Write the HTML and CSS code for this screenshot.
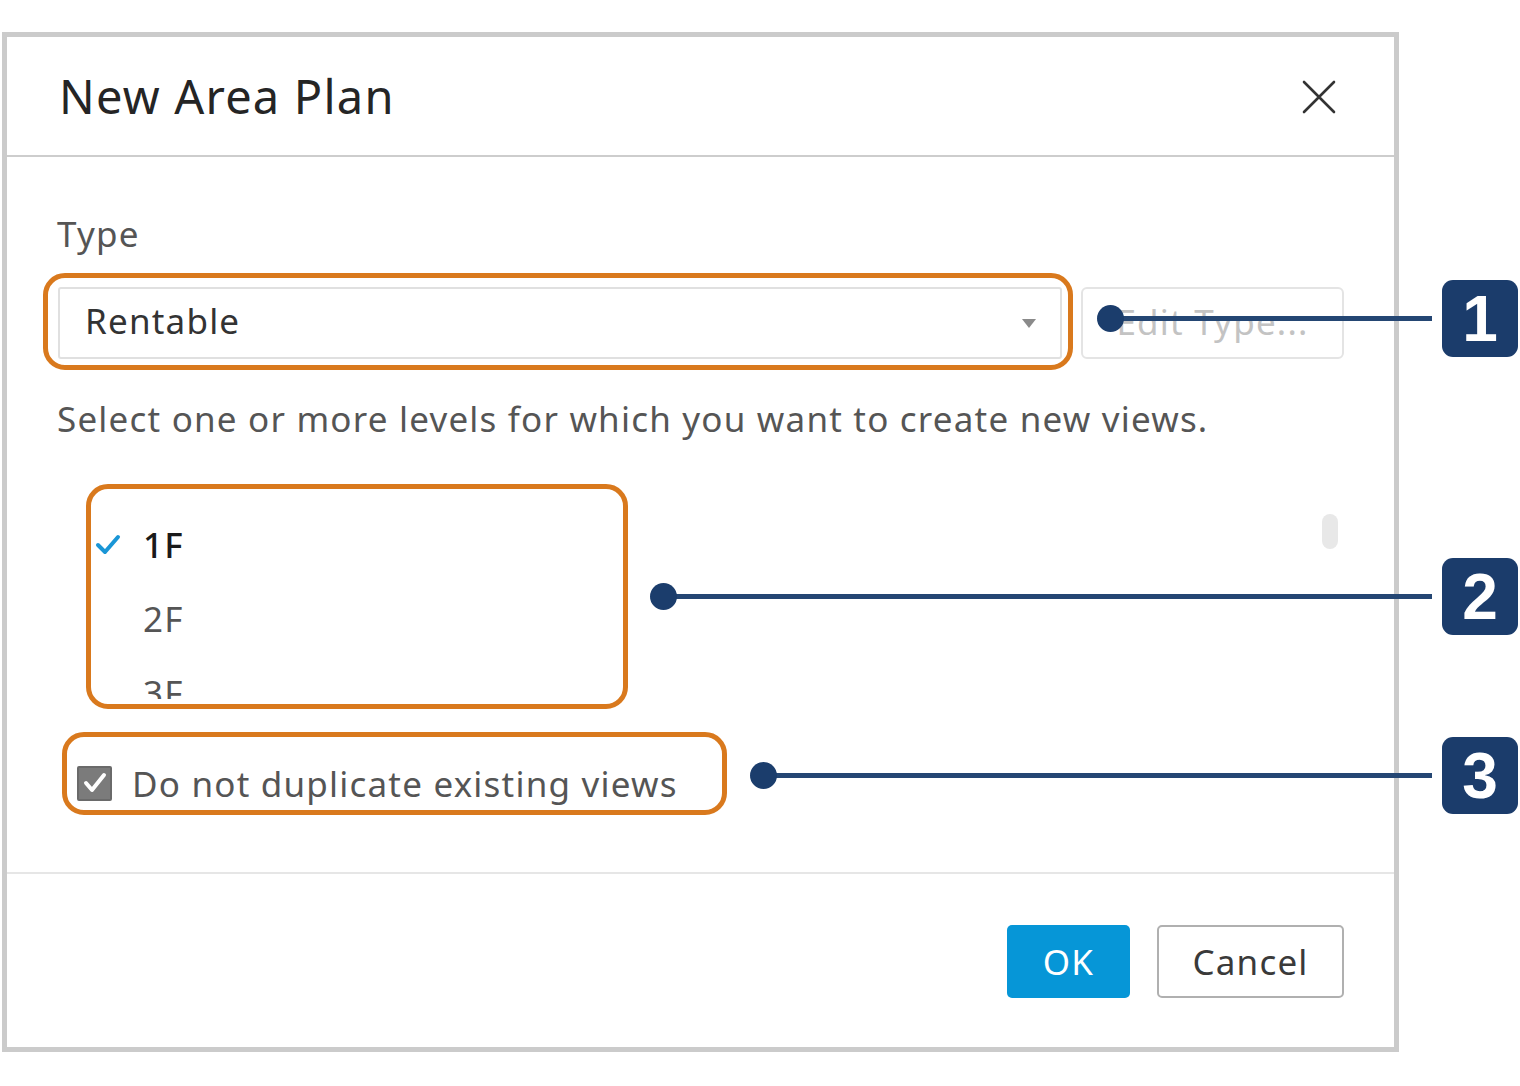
FILE: index.html
```html
<!DOCTYPE html>
<html lang="en">
<head>
<meta charset="utf-8">
<title>New Area Plan</title>
<link rel="stylesheet" href="styles.css">
</head>
<body>
<div class="page">
  <div class="dialog">
    <div class="header">
      <h1 class="title">New Area Plan</h1>
      <button class="close" aria-label="Close">
        <svg width="34" height="34" viewBox="0 0 34 34"><path d="M2 2 L32 32 M32 2 L2 32" stroke="#333" stroke-width="2.6" stroke-linecap="round" fill="none"/></svg>
      </button>
    </div>
    <div class="body">
      <div class="label">Type</div>
      <div class="type-row">
        <div class="select">
          <span class="select-value">Rentable</span>
          <span class="caret"></span>
        </div>
        <button class="edit-type" disabled>Edit Type...</button>
      </div>
      <p class="desc">Select one or more levels for which you want to create new views.</p>
      <div class="levels">
        <div class="items">
          <div class="item selected">
            <span class="tick"><svg width="26" height="22" viewBox="0 0 26 22"><path d="M3 12 L10 19 L23 4" stroke="#1a96d6" stroke-width="4" fill="none" stroke-linecap="round" stroke-linejoin="round"/></svg></span>
            <span class="item-name">1F</span>
          </div>
          <div class="item">
            <span class="tick"></span>
            <span class="item-name">2F</span>
          </div>
          <div class="item">
            <span class="tick"></span>
            <span class="item-name">3F</span>
          </div>
        </div>
        <div class="scroll-track"><div class="scroll-thumb"></div></div>
      </div>
      <label class="check-row">
        <span class="checkbox"><svg width="24" height="22" viewBox="0 0 24 22"><path d="M3 11 L9 18 L21 3" stroke="#fff" stroke-width="4" fill="none" stroke-linecap="round" stroke-linejoin="round"/></svg></span>
        <span class="check-label">Do not duplicate existing views</span>
      </label>
    </div>
    <div class="footer">
      <button class="btn ok">OK</button>
      <button class="btn cancel">Cancel</button>
    </div>
  </div>

  <div class="hl hl-type"></div>
  <div class="hl hl-levels"></div>
  <div class="hl hl-check"></div>

  <div class="pointer p1"><span class="dot"></span><span class="line"></span><span class="badge">1</span></div>
  <div class="pointer p2"><span class="dot"></span><span class="line"></span><span class="badge">2</span></div>
  <div class="pointer p3"><span class="dot"></span><span class="line"></span><span class="badge">3</span></div>
</div>
</body>
</html>
```
FILE: styles.css
```css
* { box-sizing: border-box; }
html, body { margin: 0; padding: 0; background: #fff; }
body { font-family: "Noto Sans", "Open Sans", sans-serif; color: #333; }
.page { position: relative; width: 1520px; height: 1086px; padding-top: 32px; padding-left: 2px; }

.dialog {
  width: 1397px; height: 1020px;
  border: 5px solid #cbcbcb;
  display: flex; flex-direction: column;
  background: #fff;
}
.header {
  height: 120px; flex: none;
  border-bottom: 2px solid #cdcdcd;
  display: flex; align-items: center; justify-content: space-between;
  padding: 0 58px 0 52px;
}
.title { margin: 0; font-size: 47px; font-weight: 400; color: #252525; letter-spacing: 1.2px; }
.close { background: none; border: 0; padding: 0; width: 34px; height: 34px; display: flex; margin-top: 2px; }

.body { flex: 1; padding: 57px 50px 0 50px; display: flex; flex-direction: column; letter-spacing: 1.2px; }
.label { font-size: 35px; line-height: 40px; height: 40px; color: #555; }
.type-row { display: flex; gap: 19px; margin-top: 33px; height: 72px; }
.select {
  width: 1004px; height: 72px; margin-left: 1px;
  border: 2px solid #e0e0e0; border-radius: 3px;
  display: flex; align-items: center; justify-content: space-between;
  padding: 0 24px 5px 25px;
}
.select-value { font-size: 35px; color: #333; }
.caret { width: 0; height: 0; border-left: 7px solid transparent; border-right: 7px solid transparent; border-top: 9px solid #8a8a8a; margin-top: 6px; }
.edit-type {
  width: 263px; height: 72px; background: #fff;
  border: 2px solid #e4e4e4; border-radius: 6px;
  font-family: inherit; font-size: 35px; color: #c3c3c3; padding: 0 0 4px 0; letter-spacing: 1.2px;
}
.desc { margin: 40px 0 0 0; font-size: 35px; line-height: 40px; color: #555; }

.levels { margin-top: 68px; height: 192px; display: flex; }
.items { flex: 1; overflow: hidden; }
.item { height: 74px; display: flex; align-items: center; padding-left: 38px; font-size: 35px; color: #555; }
.item.selected { color: #1a1a1a; font-weight: 500; }
.tick { width: 48px; display: flex; align-items: center; }
.scroll-track { width: 16px; margin-right: 6px; padding-top: 7px; }
.scroll-thumb { width: 16px; height: 35px; border-radius: 8px; background: #e8e8e8; }

.check-row { margin-top: 62px; height: 44px; display: flex; align-items: center; padding-left: 20px; }
.checkbox {
  width: 35px; height: 35px; background: #7b7b7b; border: 2px solid #6a6a6a; border-radius: 2px;
  display: flex; align-items: center; justify-content: center; margin-right: 20px;
}
.check-label { font-size: 35px; color: #555; }

.footer {
  height: 175px; flex: none;
  border-top: 2px solid #e6e6e6;
  display: flex; justify-content: flex-end; align-items: flex-start;
  gap: 27px; padding: 51px 50px 0 0;
}
.btn { height: 73px; font-family: inherit; font-size: 35px; border-radius: 5px; padding: 0; letter-spacing: 1.2px; }
.ok { width: 123px; background: #0696d7; border: 0; color: #fff; }
.cancel { width: 187px; background: #fff; border: 2px solid #b0b0b0; color: #3a3a3a; }

/* annotation overlays */
.hl { position: absolute; border: 5px solid #d9791d; border-radius: 22px; }
.hl-type { left: 43px; top: 273px; width: 1030px; height: 97px; }
.hl-levels { left: 86px; top: 484px; width: 542px; height: 225px; }
.hl-check { left: 62px; top: 732px; width: 665px; height: 83px; }

.pointer { position: absolute; display: flex; align-items: center; right: 2px; }
.p1 { left: 1097px; top: 280px; }
.p2 { left: 650px; top: 558px; }
.p3 { left: 750px; top: 737px; }
.dot { width: 27px; height: 27px; border-radius: 50%; background: #1b3d6c; flex: none; position: relative; z-index: 1; }
.line { flex: 1; height: 5px; background: #244673; margin-left: -13px; margin-right: 10px; }
.badge {
  width: 76px; height: 77px; flex: none; border-radius: 11px; background: #1b3c6b;
  color: #fff; font-family: "Liberation Sans", Arial, sans-serif; font-weight: 700; font-size: 64px;
  display: flex; align-items: center; justify-content: center;
}
```
